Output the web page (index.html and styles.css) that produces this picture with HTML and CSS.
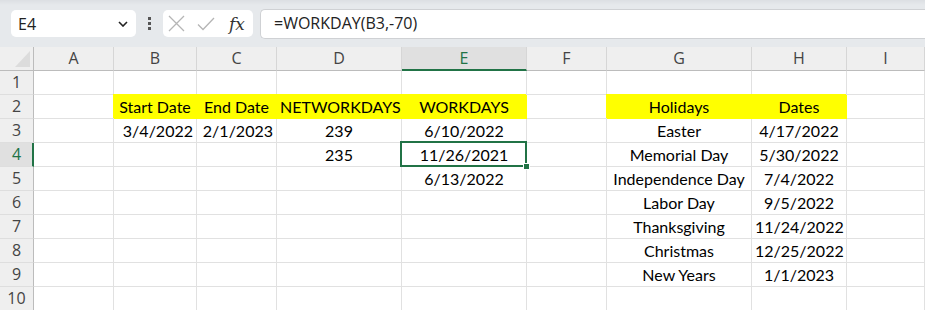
FILE: index.html
```html
<!DOCTYPE html>
<html>
  <head>
    <title>WORKDAY</title>
    <link rel="stylesheet" href="styles.css">
  </head>
  <body>
    <div class="app">
      <div class="toolbar">
        <div class="namebox">
          <span>E4</span>
          <svg class="chev" width="10" height="6" viewBox="0 0 10 6"><path d="M1 1 L5 5 L9 1" fill="none" stroke="#222" stroke-width="1.6"/></svg>
        </div>
        <div class="grip"><i></i><i></i><i></i></div>
        <div class="fxbox">
          <svg width="17" height="17" viewBox="0 0 17 17"><path d="M1 1 L16 16 M16 1 L1 16" stroke="#b5b5b5" stroke-width="1.3"/></svg>
          <svg width="18" height="14" viewBox="0 0 18 14"><path d="M1 7.5 L6 12.5 L17 1" fill="none" stroke="#b5b5b5" stroke-width="1.3"/></svg>
          <span class="fx">fx</span>
        </div>
        <div class="formula">=WORKDAY(B3,-70)</div>
      </div>

      <div class="sheet">
        <div class="row head">
          <div class="corner"></div>
          <div class="ch">A</div>
          <div class="ch">B</div>
          <div class="ch">C</div>
          <div class="ch">D</div>
          <div class="ch sel">E</div>
          <div class="ch">F</div>
          <div class="ch">G</div>
          <div class="ch">H</div>
          <div class="ch">I</div>
        </div>
        <div class="row">
          <div class="rh">1</div>
          <div class="c"></div><div class="c"></div><div class="c"></div><div class="c"></div><div class="c"></div><div class="c"></div><div class="c"></div><div class="c"></div><div class="c"></div>
        </div>
        <div class="row">
          <div class="rh">2</div>
          <div class="c"></div>
          <div class="c hl mid">Start Date</div>
          <div class="c hl mid">End Date</div>
          <div class="c hl mid">NETWORKDAYS</div>
          <div class="c hl mid">WORKDAYS</div>
          <div class="c"></div>
          <div class="c hl mid">Holidays</div>
          <div class="c hl mid">Dates</div>
          <div class="c"></div>
        </div>
        <div class="row">
          <div class="rh">3</div>
          <div class="c"></div>
          <div class="c num">3/4/2022</div>
          <div class="c num">2/1/2023</div>
          <div class="c mid">239</div>
          <div class="c mid">6/10/2022</div>
          <div class="c"></div>
          <div class="c mid">Easter</div>
          <div class="c mid">4/17/2022</div>
          <div class="c"></div>
        </div>
        <div class="row">
          <div class="rh sel">4</div>
          <div class="c"></div>
          <div class="c"></div>
          <div class="c"></div>
          <div class="c mid">235</div>
          <div class="c mid active">11/26/2021</div>
          <div class="c"></div>
          <div class="c mid">Memorial Day</div>
          <div class="c mid">5/30/2022</div>
          <div class="c"></div>
        </div>
        <div class="row">
          <div class="rh">5</div>
          <div class="c"></div><div class="c"></div><div class="c"></div><div class="c"></div>
          <div class="c mid">6/13/2022</div>
          <div class="c"></div>
          <div class="c mid">Independence Day</div>
          <div class="c mid">7/4/2022</div>
          <div class="c"></div>
        </div>
        <div class="row">
          <div class="rh">6</div>
          <div class="c"></div><div class="c"></div><div class="c"></div><div class="c"></div><div class="c"></div><div class="c"></div>
          <div class="c mid">Labor Day</div>
          <div class="c mid">9/5/2022</div>
          <div class="c"></div>
        </div>
        <div class="row">
          <div class="rh">7</div>
          <div class="c"></div><div class="c"></div><div class="c"></div><div class="c"></div><div class="c"></div><div class="c"></div>
          <div class="c mid">Thanksgiving</div>
          <div class="c mid">11/24/2022</div>
          <div class="c"></div>
        </div>
        <div class="row">
          <div class="rh">8</div>
          <div class="c"></div><div class="c"></div><div class="c"></div><div class="c"></div><div class="c"></div><div class="c"></div>
          <div class="c mid">Christmas</div>
          <div class="c mid">12/25/2022</div>
          <div class="c"></div>
        </div>
        <div class="row">
          <div class="rh">9</div>
          <div class="c"></div><div class="c"></div><div class="c"></div><div class="c"></div><div class="c"></div><div class="c"></div>
          <div class="c mid">New Years</div>
          <div class="c mid">1/1/2023</div>
          <div class="c"></div>
        </div>
        <div class="row">
          <div class="rh">10</div>
          <div class="c"></div><div class="c"></div><div class="c"></div><div class="c"></div><div class="c"></div><div class="c"></div><div class="c"></div><div class="c"></div><div class="c"></div>
        </div>
      </div>
    </div>
  </body>
</html>
```

FILE: styles.css
```css
body {
  margin: 0;
  background: #fff;
  overflow: hidden;
}

.app {
  width: 925px;
  height: 310px;
  overflow: hidden;
}

/* formula bar */
.toolbar {
  height: 47px;
  box-sizing: border-box;
  padding-top: 9px;
  display: flex;
  align-items: flex-start;
  background: linear-gradient(#dcdfe3 0, #e6e9ec 5px, #e6e9ec 100%);
  font-family: "Open Sans", "Noto Sans", sans-serif;
  color: #222;
}

.namebox {
  margin: 1px 0 0 11px;
  width: 125px;
  height: 27px;
  box-sizing: border-box;
  background: #fff;
  border-radius: 5px;
  display: flex;
  align-items: center;
  justify-content: space-between;
  padding: 0 8px 0 7px;
  font-size: 16px;
}

.grip {
  width: 27px;
  height: 29px;
  display: flex;
  flex-direction: column;
  align-items: center;
  justify-content: center;
  gap: 2px;
}

.grip i {
  width: 3px;
  height: 3px;
  background: #555;
}

.fxbox {
  margin-top: 1px;
  width: 90px;
  height: 27px;
  box-sizing: border-box;
  background: #fff;
  border-radius: 5px;
  display: flex;
  align-items: center;
  padding-left: 5px;
  gap: 12px;
}

.fx {
  font-family: "DejaVu Serif", "Liberation Serif", serif;
  font-style: italic;
  font-size: 17px;
  color: #333;
  margin-left: 2px;
}

.formula {
  flex: 1;
  margin-left: 7px;
  height: 30px;
  box-sizing: border-box;
  background: #fff;
  border: 1px solid #cfd1d4;
  border-right: none;
  border-radius: 5px 0 0 5px;
  padding: 0 0 0 13px;
  line-height: 27px;
  font-size: 16px;
}

/* grid */
.row {
  display: grid;
  grid-template-columns: 34px 80px 83px 80px 125px 125px 80px 145px 95px 1fr;
  height: 24px;
}

.row > div {
  box-sizing: border-box;
  border-right: 1px solid #e1e1e1;
  border-bottom: 1px solid #e1e1e1;
}

.head > div {
  background: #efefef;
  border-right-color: #d6d6d6;
  border-bottom-color: #bcbcbc;
  font-family: "Open Sans", "Noto Sans", sans-serif;
  font-size: 16px;
  color: #444;
  text-align: center;
  line-height: 23px;
}

.head .corner {
  position: relative;
  border-right-color: #bcbcbc;
}

.corner::after {
  content: "";
  position: absolute;
  right: 3px;
  bottom: 3px;
  width: 15px;
  height: 16px;
  background: #dcdcdc;
  clip-path: polygon(100% 0, 100% 100%, 0 100%);
}

.head .sel {
  background: #e0e0e0;
  color: #217346;
  border-bottom: 2px solid #217346;
  line-height: 22px;
}

.row > .rh {
  background: #efefef;
  border-right-color: #bcbcbc;
  border-bottom-color: #dedede;
  font-family: "Open Sans", "Noto Sans", sans-serif;
  font-size: 16px;
  color: #444;
  text-align: center;
  line-height: 23px;
}

.row > .rh.sel {
  background: #e0e0e0;
  color: #217346;
  border-right: 2px solid #217346;
  padding-left: 1px;
}

.c {
  font-family: Lato, "Liberation Sans", sans-serif;
  font-size: 16px;
  color: #000;
  line-height: 23px;
  padding: 0 3px;
  white-space: nowrap;
}

.mid {
  text-align: center;
}

.num {
  text-align: right;
}

.row > .hl {
  background: #ffff00;
  border-color: #ffff00;
  box-shadow: -1px -1px 0 0 #ffff00;
}

.active {
  position: relative;
}

.active::before {
  content: "";
  position: absolute;
  left: -2px;
  top: -2px;
  right: -1px;
  bottom: -1px;
  border: 2px solid #217346;
}

.active::after {
  content: "";
  position: absolute;
  right: -4px;
  bottom: -4px;
  width: 5px;
  height: 5px;
  background: #217346;
  border: 1px solid #fff;
}
```
